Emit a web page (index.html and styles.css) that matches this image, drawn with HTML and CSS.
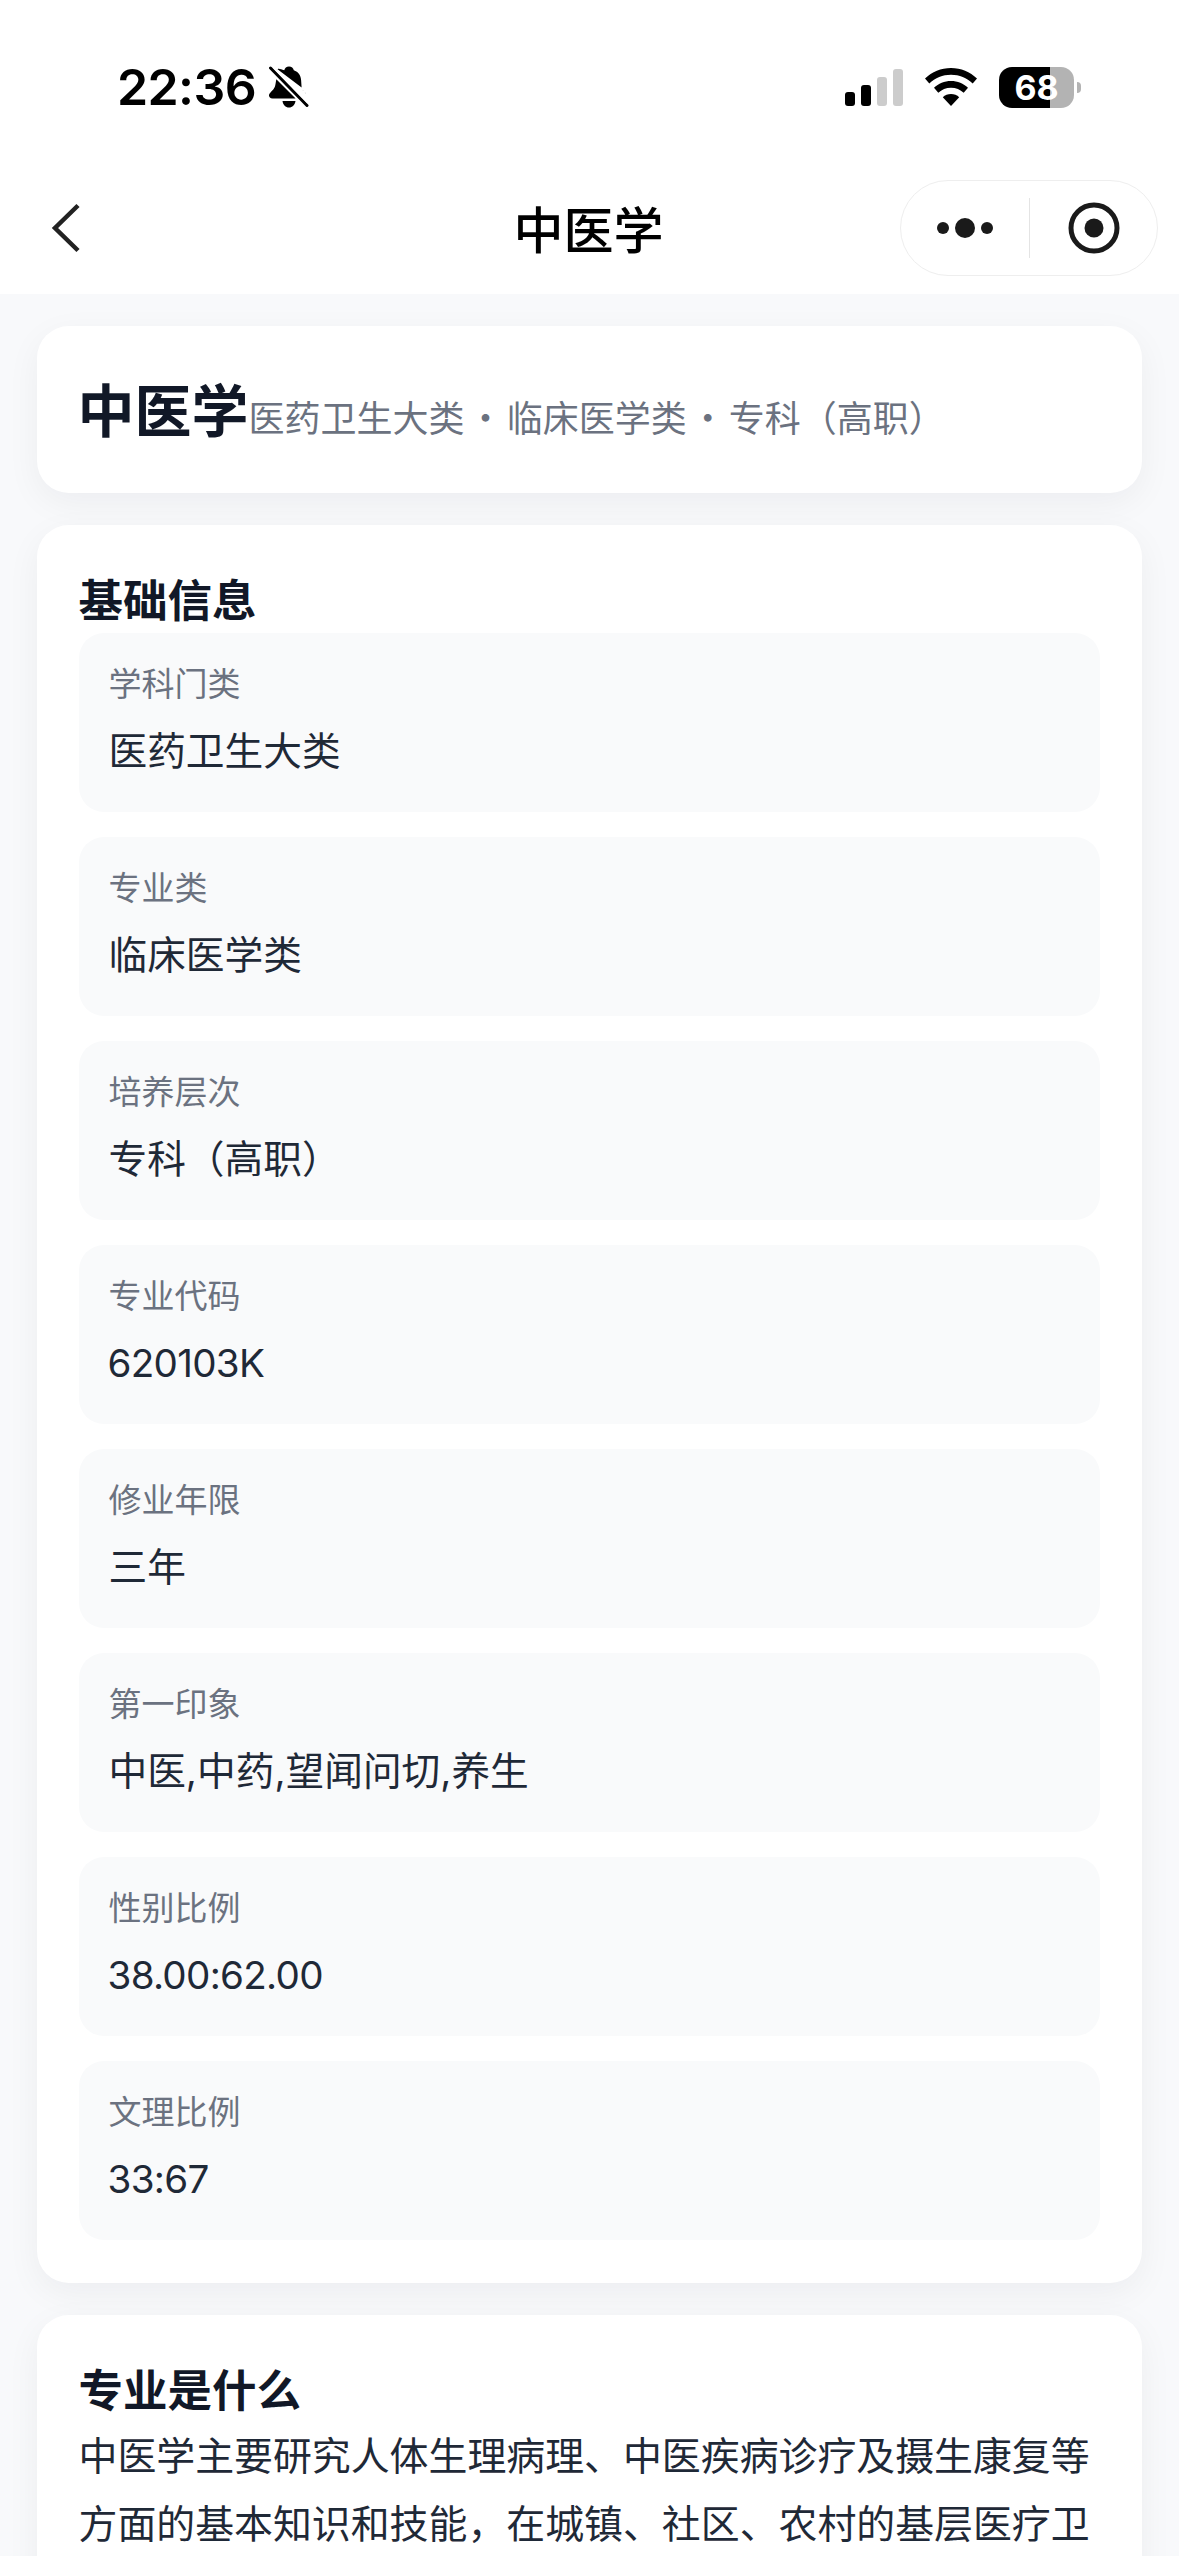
FILE: index.html
```html
<!DOCTYPE html>
<html lang="zh-CN">
<head>
<meta charset="utf-8">
<title>中医学</title>
<link rel="stylesheet" href="styles.css">
</head>
<body>
<div class="page">
  <header class="top">
    <div class="status">
      <span class="time">22:36</span>
      <svg class="bell" viewBox="0 0 41 44" width="41" height="44">
        <path fill="#000" d="M21 1.5c2.6 0 4.3 1.7 4.8 3.8 4.6 1.500 7 5.200 7.300 9.700l.5 7.500L9.500 4.300C11 3 12.800 4.700 16.300 5.200 16.800 3.200 18.500 1.500 21 1.500zM8.300 14.200 27.600 33.500H4.500c-2.300 0-3.500-1.500-3.500-3 0-1.300.7-2.200 1.900-3.500 2.400-2.500 4.100-4 4.700-8.500zM34.300 24.500c.6.900 1.600 1.800 3.500 3.800l.7.900-4.200-4.700zM14.500 36h13c-.6 4-3.100 6.500-6.500 6.500s-5.900-2.500-6.500-6.500z"/>
        <path stroke="#000" stroke-width="3" stroke-linecap="round" fill="none" d="M2.500 3 39 40.500"/>
        <path stroke="#fff" stroke-width="2" fill="none" d="M5.500 2 40 37.500"/>
      </svg>
      <span class="spacer"></span>
      <svg class="signal" viewBox="0 0 58 37" width="58" height="37">
        <rect x="0" y="23" width="10" height="14" rx="3" fill="#000"/>
        <rect x="16" y="16" width="10" height="21" rx="3" fill="#000"/>
        <rect x="32" y="8" width="10" height="29" rx="3" fill="#ccc"/>
        <rect x="48" y="0" width="10" height="37" rx="3" fill="#ccc"/>
      </svg>
      <svg class="wifi" viewBox="0 0 52 38" width="52" height="38">
        <path fill="#000" d="M26 0c10 0 19 3.900 26 10.500l-4.300 5C41.800 10 34.300 6.800 26 6.800S10.200 10 4.300 15.500L0 10.500C7 3.900 16 0 26 0z"/>
        <path fill="#000" d="M26 13c6.600 0 12.500 2.500 17 6.800l-4.300 5C35.300 21.700 30.900 19.800 26 19.800s-9.300 1.900-12.700 5l-4.300-5c4.500-4.300 10.400-6.800 17-6.800z"/>
        <path fill="#000" d="M26 26c3.200 0 6 1.200 8.200 3.200L26 38l-8.200-8.800C20 27.200 22.800 26 26 26z"/>
      </svg>
      <div class="battery">
        <span class="battery-body"><span class="battery-num">68</span></span>
        <span class="battery-nub"></span>
      </div>
    </div>
    <nav class="nav">
      <svg class="back" viewBox="0 0 30 50" width="30" height="50">
        <path d="M27 2.500 4 25l23 22.500" fill="none" stroke="#222" stroke-width="4.500"/>
      </svg>
      <div class="nav-title">中医学</div>
      <div class="capsule">
        <svg class="capsule-dots" viewBox="0 0 56 20" width="56" height="20">
          <circle cx="6" cy="10" r="6" fill="#1a1a1a"/>
          <circle cx="28" cy="10" r="10" fill="#1a1a1a"/>
          <circle cx="50" cy="10" r="6" fill="#1a1a1a"/>
        </svg>
        <span class="capsule-line"></span>
        <svg class="capsule-target" viewBox="0 0 52 52" width="52" height="52">
          <circle cx="26" cy="26" r="23" fill="none" stroke="#1a1a1a" stroke-width="5"/>
          <circle cx="26" cy="26" r="9.500" fill="#1a1a1a"/>
        </svg>
      </div>
    </nav>
  </header>

  <main class="content">
    <section class="card head-card">
      <h1 class="major">中医学</h1>
      <p class="major-sub">医药卫生大类 · 临床医学类 · 专科（高职）</p>
    </section>

    <section class="card">
      <h2 class="section-title">基础信息</h2>
      <div class="items">
        <div class="item"><div class="label">学科门类</div><div class="value">医药卫生大类</div></div>
        <div class="item"><div class="label">专业类</div><div class="value">临床医学类</div></div>
        <div class="item"><div class="label">培养层次</div><div class="value">专科（高职）</div></div>
        <div class="item"><div class="label">专业代码</div><div class="value num">620103K</div></div>
        <div class="item"><div class="label">修业年限</div><div class="value">三年</div></div>
        <div class="item"><div class="label">第一印象</div><div class="value">中医,中药,望闻问切,养生</div></div>
        <div class="item"><div class="label">性别比例</div><div class="value num">38.00:62.00</div></div>
        <div class="item"><div class="label">文理比例</div><div class="value num">33:67</div></div>
      </div>
    </section>

    <section class="card last-card">
      <h2 class="section-title">专业是什么</h2>
      <p class="body-text">中医学主要研究人体生理病理、中医疾病诊疗及摄生康复等方面的基本知识和技能，在城镇、社区、农村的基层医疗卫</p>
    </section>
  </main>
</div>
</body>
</html>
```
FILE: styles.css
```css
* { box-sizing: border-box; margin: 0; padding: 0; }
html, body { height: 100%; background: #f8f9fb; }
body {
  font-family: Inter, "Noto Sans CJK SC", "Noto Sans", sans-serif;
  overflow: hidden;
}
.page { width: 1179px; height: 2556px; overflow: hidden; background: #f8f9fb; }

.top { background: #fff; height: 294px; }
.status {
  height: 174px;
  display: flex;
  align-items: center;
  padding: 0 98px 0 117px;
}
.time { font-size: 50px; font-weight: 600; color: #000; line-height: 60px; letter-spacing: -0.6px; }
.bell { margin-left: 12px; }
.spacer { flex: 1; }
.wifi { margin-left: 22px; }
.battery { display: flex; align-items: center; margin-left: 22px; }
.battery-body {
  width: 75px;
  height: 41px;
  border-radius: 13px;
  background: linear-gradient(90deg, #000 0, #000 51px, #b3b3b3 51px, #b3b3b3 100%);
  display: flex;
  align-items: center;
  justify-content: center;
}
.battery-num { color: #fff; font-size: 34px; font-weight: 700; line-height: 41px; }
.battery-nub {
  width: 4px;
  height: 11px;
  margin-left: 3px;
  background: #b3b3b3;
  border-radius: 0 6px 6px 0;
}

.nav {
  display: grid;
  grid-template-columns: 1fr auto 1fr;
  align-items: center;
  height: 108px;
  padding: 0 21px 0 51px;
}
.back { display: block; }
.nav-title {
  font-family: "Noto Sans CJK SC", sans-serif;
  font-size: 50px;
  font-weight: 500;
  color: #000;
  line-height: 60px;
  margin-bottom: 3px;
  transform: translateX(-16px);
}
.capsule {
  justify-self: end;
  width: 258px;
  height: 96px;
  border: 1.5px solid #eeeeee;
  border-radius: 48px;
  background: #fff;
  display: flex;
  align-items: center;
  padding-left: 36px;
}
.capsule-line { width: 1.5px; height: 60px; background: #e4e4e4; margin-left: 35.500px; }
.capsule-target { margin-left: 38px; }

.content {
  padding: 32px 37px 0;
  display: flex;
  flex-direction: column;
  gap: 32px;
}
.card {
  background: #fff;
  border-radius: 32px;
  padding: 41px 42px 43px 41.500px;
  box-shadow: 0 10px 34px rgba(17, 24, 39, 0.05);
}
.head-card {
  height: 167px;
  display: flex;
  align-items: center;
  gap: 0;
  padding-top: 0;
  padding-bottom: 0;
}
.major {
  font-family: "Noto Sans CJK SC", sans-serif;
  font-size: 57px;
  font-weight: 700;
  line-height: 70px;
  color: #111827;
  margin: -6px 0 0 -1px;
}
.major-sub {
  font-family: "Noto Sans CJK SC", sans-serif;
  font-size: 36px;
  line-height: 50px;
  color: #6b7280;
  padding-top: 12px;
  word-spacing: -5px;
}
.section-title {
  font-family: "Noto Sans CJK SC", sans-serif;
  font-size: 44.500px;
  font-weight: 700;
  line-height: 63px;
  color: #111827;
}
.items { display: flex; flex-direction: column; gap: 25px; margin-top: 4px; }
.item {
  background: #f9fafb;
  border-radius: 25px;
  padding: 26.500px 30px 30px;
  height: 179px;
}
.label { font-size: 33px; line-height: 48px; color: #6b7280; }
.value { font-size: 38.700px; line-height: 60px; color: #1f2937; margin-top: 13px; }
.value.num { font-size: 38.600px; letter-spacing: -0.7px; margin-left: -1px; }
.last-card { padding-bottom: 200px; }
.body-text {
  font-family: "Noto Sans CJK SC", sans-serif;
  font-size: 38.900px;
  line-height: 68px;
  color: #1f2937;
}
```
